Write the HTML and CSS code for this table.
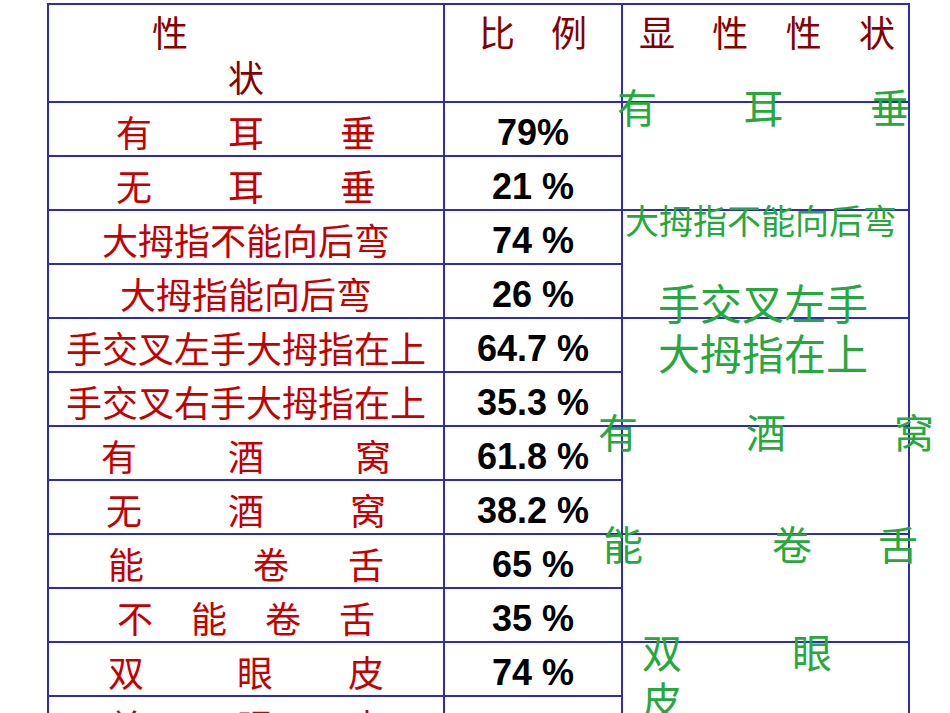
FILE: index.html
```html
<!DOCTYPE html>
<html lang="zh">
<head>
<meta charset="utf-8">
<title>性状比例</title>
<link rel="stylesheet" href="styles.css">
</head>
<body>
<div class="sheet">
  <table class="grid">
    <colgroup>
      <col class="c-trait">
      <col class="c-ratio">
      <col class="c-dom">
    </colgroup>
    <tr class="head">
      <td><div class="hl1">性</div><div class="hl2">状</div></td>
      <td><div class="ratio-head">比　例</div></td>
      <td><div class="dom-head"><span>显</span><span>性</span><span>性</span><span>状</span></div></td>
    </tr>
    <tr>
      <td><div class="tr r1"><span>有</span><span>耳</span><span>垂</span></div></td>
      <td><div class="pct">79%</div></td>
      <td class="dom" rowspan="2"></td>
    </tr>
    <tr>
      <td><div class="tr r1"><span>无</span><span>耳</span><span>垂</span></div></td>
      <td><div class="pct">21 %</div></td>
    </tr>
    <tr>
      <td><div class="tr">大拇指不能向后弯</div></td>
      <td><div class="pct">74 %</div></td>
      <td class="dom" rowspan="2"></td>
    </tr>
    <tr>
      <td><div class="tr">大拇指能向后弯</div></td>
      <td><div class="pct">26 %</div></td>
    </tr>
    <tr>
      <td><div class="tr">手交叉左手大拇指在上</div></td>
      <td><div class="pct">64.7 %</div></td>
      <td class="dom" rowspan="2"></td>
    </tr>
    <tr>
      <td><div class="tr">手交叉右手大拇指在上</div></td>
      <td><div class="pct">35.3 %</div></td>
    </tr>
    <tr>
      <td><div class="tr r7"><span>有</span><span>酒</span><span>窝</span></div></td>
      <td><div class="pct">61.8 %</div></td>
      <td class="dom" rowspan="2"></td>
    </tr>
    <tr>
      <td><div class="tr r8"><span>无</span><span>酒</span><span>窝</span></div></td>
      <td><div class="pct">38.2 %</div></td>
    </tr>
    <tr>
      <td><div class="tr r9"><span>能</span><span>卷</span><span>舌</span></div></td>
      <td><div class="pct">65 %</div></td>
      <td class="dom" rowspan="2"></td>
    </tr>
    <tr>
      <td><div class="tr r10"><span>不</span><span>能</span><span>卷</span><span>舌</span></div></td>
      <td><div class="pct">35 %</div></td>
    </tr>
    <tr>
      <td><div class="tr r11"><span>双</span><span>眼</span><span>皮</span></div></td>
      <td><div class="pct">74 %</div></td>
      <td class="dom" rowspan="2"></td>
    </tr>
    <tr>
      <td><div class="tr r11"><span>单</span><span>眼</span><span>皮</span></div></td>
      <td><div class="pct">26 %</div></td>
    </tr>
  </table>

  <div class="overlay">
    <div class="gt g-ear"><span>有</span><span>耳</span><span>垂</span></div>
    <div class="gt g-thumb">大拇指不能向后弯</div>
    <div class="gt g-cross">手交叉左手<br>大拇指在上</div>
    <div class="gt g-dimple"><span>有</span><span>酒</span><span>窝</span></div>
    <div class="gt g-tongue"><span>能</span><span>卷</span><span>舌</span></div>
    <div class="gt g-eyelid"><span>双</span><span>眼</span><br><span>皮</span></div>
  </div>
</div>
</body>
</html>
```

FILE: styles.css
```css
html, body {
  margin: 0;
  padding: 0;
  overflow: hidden;
  background: #ffffff;
}

body {
  font-family: "Noto Sans CJK SC", "Liberation Sans", sans-serif;
}

.sheet {
  position: relative;
  width: 950px;
  height: 713px;
  overflow: hidden;
}

.grid {
  border-collapse: collapse;
  table-layout: fixed;
  margin: 3px 0 0 47px;
  width: 863px;
}

.c-trait { width: 396px; }
.c-ratio { width: 178px; }
.c-dom { width: 287px; }

.grid td {
  border: 2px solid #2c2cb4;
  padding: 0;
  height: 52px;
  vertical-align: middle;
}

.grid tr.head td {
  height: 96px;
  vertical-align: top;
  color: #860000;
  font-size: 36px;
  line-height: 45px;
}

.hl1 {
  padding: 4px 0 0 103px;
  text-align: left;
}

.hl2 {
  text-align: center;
}

.ratio-head {
  padding-top: 4px;
  text-align: center;
}

.dom-head {
  display: flex;
  justify-content: space-between;
  padding: 4px 13px 0 16px;
}

.tr {
  display: flex;
  justify-content: center;
  color: #c40000;
  font-size: 36px;
  line-height: 40px;
  padding-top: 4px;
  white-space: nowrap;
}

.r1 { gap: 76px; }
.r7 { gap: 91px; }
.r8 { gap: 86px; }
.r9 span:nth-child(1) { margin-right: 109px; }
.r9 span:nth-child(2) { margin-right: 59px; }
.r10 { gap: 38px; }
.r11 span:nth-child(1) { margin-right: 93px; }
.r11 span:nth-child(2) { margin-right: 75px; }

.pct {
  padding-top: 8px;
  text-align: center;
  font-family: "Liberation Sans", Arial, sans-serif;
  font-weight: bold;
  font-size: 36px;
  line-height: normal;
  color: #000000;
  white-space: nowrap;
}

.overlay {
  position: absolute;
  inset: 0;
  pointer-events: none;
}

.gt {
  position: absolute;
  color: #26a83c;
  font-size: 40px;
  line-height: 40px;
  white-space: nowrap;
}

.g-ear {
  left: 617px;
  top: 86px;
  width: 293px;
  display: flex;
  justify-content: space-between;
}

.g-thumb {
  left: 625px;
  top: 203px;
  font-size: 34px;
  line-height: 34px;
}

.g-cross {
  left: 658px;
  top: 277px;
  font-size: 42px;
  line-height: 50px;
}

.g-dimple {
  left: 598px;
  top: 411px;
  width: 336px;
  display: flex;
  justify-content: space-between;
}

.g-tongue {
  left: 603px;
  top: 523px;
  display: flex;
}

.g-tongue span:nth-child(1) { margin-right: 129px; }
.g-tongue span:nth-child(2) { margin-right: 66px; }

.g-eyelid {
  left: 642px;
  top: 627px;
  line-height: 48px;
}

.g-eyelid span:nth-child(1) { margin-right: 110px; }
```
